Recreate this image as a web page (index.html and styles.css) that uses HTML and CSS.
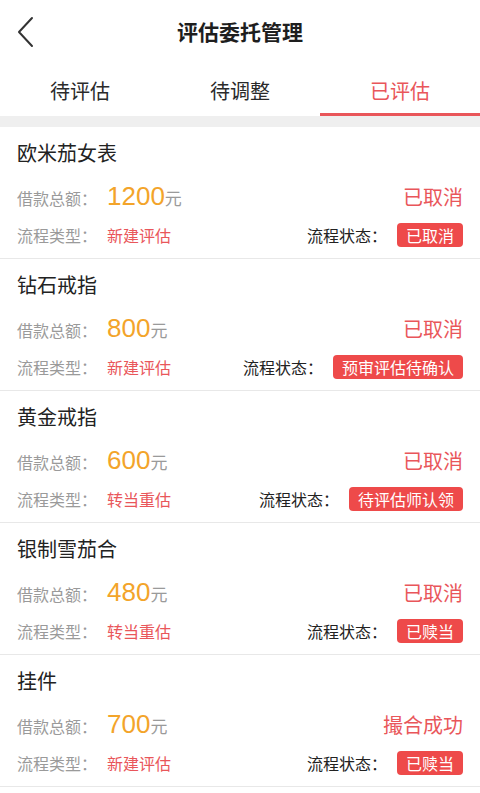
FILE: index.html
```html
<!DOCTYPE html>
<html lang="zh-CN">
<head>
  <meta charset="UTF-8">
  <meta name="viewport" content="width=device-width, initial-scale=1.0">
  <title>评估委托管理</title>
  <link rel="stylesheet" href="styles.css">
</head>
<body>
  <div class="page">
    <header class="top-bar">
      <a class="back" href="#">
        <svg viewBox="0 0 20 32" xmlns="http://www.w3.org/2000/svg">
          <path d="M16 2 L3 16 L16 30" />
        </svg>
      </a>
      <h1>评估委托管理</h1>
    </header>

    <nav class="tabs">
      <div class="tab">待评估</div>
      <div class="tab">待调整</div>
      <div class="tab active">已评估</div>
    </nav>

    <div class="gap"></div>

    <div class="list">
      <div class="item">
        <div class="item-name">欧米茄女表</div>
        <div class="row">
          <span class="label">借款总额：</span>
          <span class="amount">1200</span><span class="unit">元</span>
          <span class="result">已取消</span>
        </div>
        <div class="row row-small">
          <span class="label">流程类型：</span>
          <span class="type">新建评估</span>
          <span class="state-label">流程状态：</span>
          <span class="badge">已取消</span>
        </div>
      </div>

      <div class="item">
        <div class="item-name">钻石戒指</div>
        <div class="row">
          <span class="label">借款总额：</span>
          <span class="amount">800</span><span class="unit">元</span>
          <span class="result">已取消</span>
        </div>
        <div class="row row-small">
          <span class="label">流程类型：</span>
          <span class="type">新建评估</span>
          <span class="state-label">流程状态：</span>
          <span class="badge">预审评估待确认</span>
        </div>
      </div>

      <div class="item">
        <div class="item-name">黄金戒指</div>
        <div class="row">
          <span class="label">借款总额：</span>
          <span class="amount">600</span><span class="unit">元</span>
          <span class="result">已取消</span>
        </div>
        <div class="row row-small">
          <span class="label">流程类型：</span>
          <span class="type">转当重估</span>
          <span class="state-label">流程状态：</span>
          <span class="badge">待评估师认领</span>
        </div>
      </div>

      <div class="item">
        <div class="item-name">银制雪茄合</div>
        <div class="row">
          <span class="label">借款总额：</span>
          <span class="amount">480</span><span class="unit">元</span>
          <span class="result">已取消</span>
        </div>
        <div class="row row-small">
          <span class="label">流程类型：</span>
          <span class="type">转当重估</span>
          <span class="state-label">流程状态：</span>
          <span class="badge">已赎当</span>
        </div>
      </div>

      <div class="item">
        <div class="item-name">挂件</div>
        <div class="row">
          <span class="label">借款总额：</span>
          <span class="amount">700</span><span class="unit">元</span>
          <span class="result">撮合成功</span>
        </div>
        <div class="row row-small">
          <span class="label">流程类型：</span>
          <span class="type">新建评估</span>
          <span class="state-label">流程状态：</span>
          <span class="badge">已赎当</span>
        </div>
      </div>
    </div>
  </div>
</body>
</html>
```

FILE: styles.css
```css
:root {
  --red: #e9565a;
  --badge-red: #ee4a4a;
  --orange: #f3a42a;
  --text: #222222;
  --gray: #9a9a9a;
  --line: #e8e8e8;
  --band: #efefef;
}

* {
  margin: 0;
  padding: 0;
  box-sizing: border-box;
}

body {
  font-family: "Noto Sans CJK SC", "Noto Sans", sans-serif;
  background: #ffffff;
  color: var(--text);
}

.page {
  width: 480px;
  min-height: 100vh;
  background: #ffffff;
}

/* Header */
.top-bar {
  height: 64px;
  display: flex;
  align-items: center;
  justify-content: center;
  position: relative;
}

.top-bar h1 {
  font-size: 21px;
  font-weight: 700;
  color: #1e1e1e;
  line-height: 1;
  margin-top: -2px;
}

.back {
  position: absolute;
  left: 16px;
  top: 16px;
  width: 20px;
  height: 32px;
}

.back svg {
  width: 20px;
  height: 32px;
  fill: none;
  stroke: #333333;
  stroke-width: 2;
  stroke-linecap: round;
  stroke-linejoin: round;
}

/* Tabs */
.tabs {
  display: flex;
  height: 52px;
}

.tab {
  flex: 1;
  display: flex;
  align-items: center;
  justify-content: center;
  font-size: 20px;
  color: #2a2a2a;
  border-bottom: 3px solid transparent;
  padding-top: 3px;
}

.tab.active {
  color: var(--red);
  border-bottom-color: var(--red);
}

.gap {
  height: 11px;
  background: var(--band);
}

/* List */
.item {
  height: 132px;
  padding: 14px 17px 11px;
  border-bottom: 1px solid var(--line);
}

.item-name {
  font-size: 20px;
  line-height: 24px;
  color: var(--text);
}

.row {
  display: flex;
  align-items: baseline;
  margin-top: 16px;
  height: 30px;
  line-height: 30px;
}

.row-small {
  align-items: center;
  margin-top: 12px;
  height: 24px;
  line-height: 24px;
}

.label {
  width: 90px;
  font-size: 16px;
  color: var(--gray);
}

.amount {
  font-family: "Liberation Sans", Arial, sans-serif;
  font-size: 26px;
  color: var(--orange);
}

.unit {
  font-size: 17px;
  color: var(--gray);
}

.result {
  margin-left: auto;
  font-size: 20px;
  color: var(--red);
}

.type {
  font-size: 16px;
  color: var(--red);
}

.state-label {
  margin-left: auto;
  font-size: 16px;
  color: var(--text);
}

.badge {
  margin-left: 10px;
  height: 24px;
  padding: 0 9px;
  border-radius: 4px;
  background: var(--badge-red);
  color: #ffffff;
  font-size: 16px;
  line-height: 24px;
}
```
